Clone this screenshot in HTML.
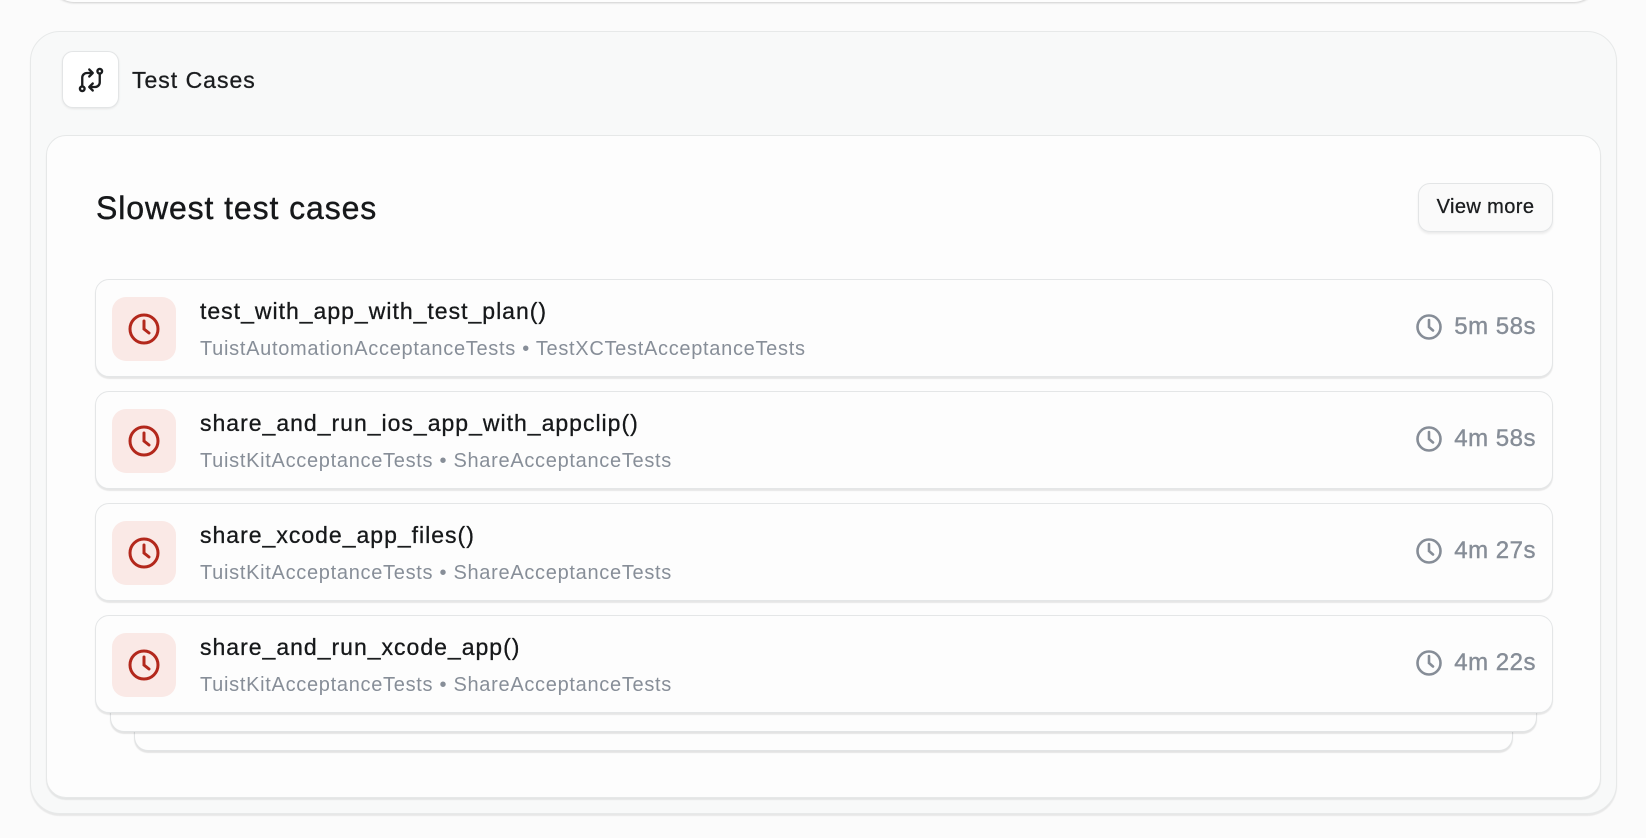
<!DOCTYPE html>
<html><head><style>
*{box-sizing:border-box;margin:0;padding:0}
body{width:1646px;height:838px;background:#fbfbfb;font-family:"Liberation Sans",sans-serif;position:relative;overflow:hidden}
.topcard{position:absolute;left:50px;right:48px;top:-40px;height:42px;border-radius:0 0 24px 24px;background:#fdfdfd;box-shadow:0 1px 2px rgba(0,0,0,.18)}
.outer{position:absolute;left:30px;top:31px;width:1587px;height:783px;background:#f8f9f9;border:1px solid #e7e9e9;border-radius:30px;box-shadow:0 2px 1px rgba(0,0,0,.08)}
.ibox{position:absolute;left:62px;top:51px;width:57px;height:57px;border:1px solid #e3e5e6;border-radius:11px;background:#fff;box-shadow:0 1px 2px rgba(0,0,0,.08)}
.ibox svg{position:absolute;left:14px;top:14px}
.hdr{position:absolute;left:132px;top:67px;font-size:23px;color:#1b1d1f;letter-spacing:1px;-webkit-text-stroke:.3px #1b1d1f}
.inner{position:absolute;left:46px;top:135px;width:1555px;height:663px;background:#fdfdfd;border:1px solid #e6e8e8;border-radius:20px;box-shadow:0 2px 1px rgba(0,0,0,.08)}
.h2{position:absolute;left:96px;top:190px;font-size:32px;color:#16181a;letter-spacing:.9px;-webkit-text-stroke:.4px #16181a}
.btn{position:absolute;left:1418px;top:183px;width:135px;height:49px;border:1px solid #e3e5e6;border-radius:12px;background:#fafafa;box-shadow:0 2px 2px rgba(0,0,0,.07);font-size:20px;color:#1b1d1f;text-align:center;line-height:47px;letter-spacing:.4px;-webkit-text-stroke:.3px #1b1d1f}
.row{position:absolute;left:95px;width:1458px;height:98px;background:#fdfdfd;border:1px solid #e4e6e7;border-radius:14px;box-shadow:0 2px 1px rgba(0,0,0,.09)}
.ric{position:absolute;left:16px;top:17px;width:64px;height:64px;border-radius:14px;background:#fae9e6}
.ric svg{position:absolute;left:15px;top:15px}
.t{position:absolute;left:104px;top:18px;font-size:23px;color:#16181a;letter-spacing:1px;-webkit-text-stroke:.3px #16181a}
.s{position:absolute;left:104px;top:58px;font-size:20px;color:#878e98;letter-spacing:.7px}
.tm{position:absolute;right:16px;top:33px;font-size:24px;color:#868d97;display:flex;align-items:center;gap:11px;letter-spacing:.5px;-webkit-text-stroke:.4px #868d97}
.stk{position:absolute;background:#fdfdfd;border:1px solid #e2e4e5;border-top:none;border-radius:0 0 14px 14px;box-shadow:0 2px 1px rgba(0,0,0,.1)}
</style></head><body>
<div class="topcard"></div>
<div class="outer"></div>
<div class="ibox"><svg width="28" height="28" viewBox="0 0 24 24" fill="none" stroke="#1b1d1f" stroke-width="2" stroke-linecap="round" stroke-linejoin="round"><circle cx="4.5" cy="19.5" r="2"/><circle cx="19.5" cy="4.5" r="2"/><path d="M4.5 17.5V10a4 4 0 0 1 4-4h4M10.5 3l3 3-3 3"/><path d="M19.5 6.5V14a4 4 0 0 1-4 4h-4M13.5 21l-3-3 3-3"/></svg></div>
<div class="hdr">Test Cases</div>
<div class="inner"></div>
<div class="h2">Slowest test cases</div>
<div class="btn">View more</div>
<div class="stk" style="left:134px;width:1379px;top:700px;height:51px"></div>
<div class="stk" style="left:110px;width:1427px;top:690px;height:42px"></div>

<div class="row" style="top:279px"><div class="ric"><svg width="34" height="34" viewBox="0 0 34 34" fill="none" stroke="#b3281c" stroke-width="3" stroke-linecap="round"><circle cx="17" cy="17" r="14"/><path d="M17 9v8l5 4"/></svg></div><div class="t">test_with_app_with_test_plan()</div><div class="s">TuistAutomationAcceptanceTests • TestXCTestAcceptanceTests</div><div class="tm"><svg width="28" height="28" viewBox="0 0 28 28" fill="none" stroke="#868d97" stroke-width="2.6" stroke-linecap="round"><circle cx="14" cy="14" r="11.5"/><path d="M14 7v7l4 3.5"/></svg>5m 58s</div></div>

<div class="row" style="top:391px"><div class="ric"><svg width="34" height="34" viewBox="0 0 34 34" fill="none" stroke="#b3281c" stroke-width="3" stroke-linecap="round"><circle cx="17" cy="17" r="14"/><path d="M17 9v8l5 4"/></svg></div><div class="t">share_and_run_ios_app_with_appclip()</div><div class="s">TuistKitAcceptanceTests • ShareAcceptanceTests</div><div class="tm"><svg width="28" height="28" viewBox="0 0 28 28" fill="none" stroke="#868d97" stroke-width="2.6" stroke-linecap="round"><circle cx="14" cy="14" r="11.5"/><path d="M14 7v7l4 3.5"/></svg>4m 58s</div></div>

<div class="row" style="top:503px"><div class="ric"><svg width="34" height="34" viewBox="0 0 34 34" fill="none" stroke="#b3281c" stroke-width="3" stroke-linecap="round"><circle cx="17" cy="17" r="14"/><path d="M17 9v8l5 4"/></svg></div><div class="t">share_xcode_app_files()</div><div class="s">TuistKitAcceptanceTests • ShareAcceptanceTests</div><div class="tm"><svg width="28" height="28" viewBox="0 0 28 28" fill="none" stroke="#868d97" stroke-width="2.6" stroke-linecap="round"><circle cx="14" cy="14" r="11.5"/><path d="M14 7v7l4 3.5"/></svg>4m 27s</div></div>

<div class="row" style="top:615px"><div class="ric"><svg width="34" height="34" viewBox="0 0 34 34" fill="none" stroke="#b3281c" stroke-width="3" stroke-linecap="round"><circle cx="17" cy="17" r="14"/><path d="M17 9v8l5 4"/></svg></div><div class="t">share_and_run_xcode_app()</div><div class="s">TuistKitAcceptanceTests • ShareAcceptanceTests</div><div class="tm"><svg width="28" height="28" viewBox="0 0 28 28" fill="none" stroke="#868d97" stroke-width="2.6" stroke-linecap="round"><circle cx="14" cy="14" r="11.5"/><path d="M14 7v7l4 3.5"/></svg>4m 22s</div></div>
</body></html>
